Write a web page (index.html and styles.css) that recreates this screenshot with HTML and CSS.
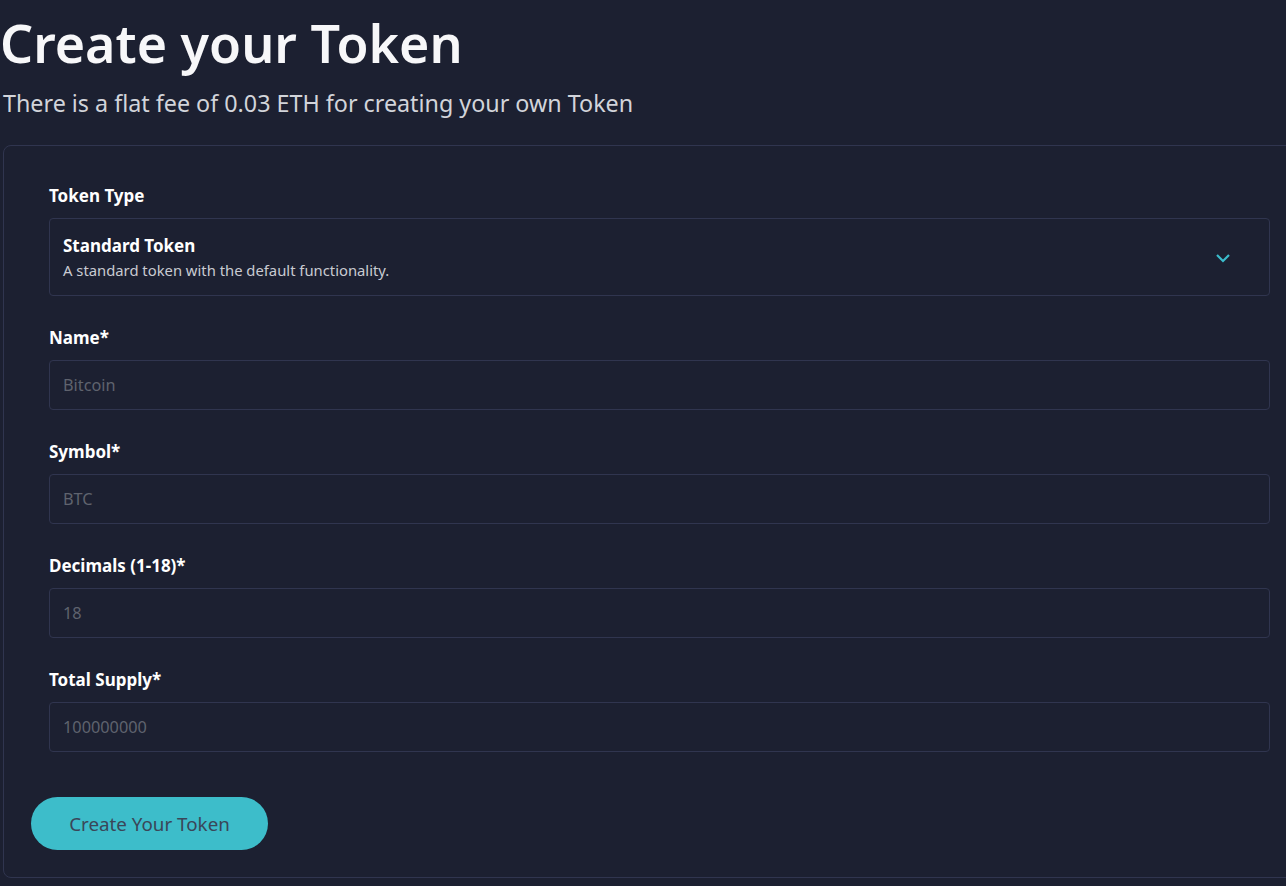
FILE: index.html
```html
<!DOCTYPE html>
<html lang="en">
<head>
    <meta charset="UTF-8">
    <meta name="viewport" content="width=device-width, initial-scale=1.0">
    <title>Create your Token</title>
    <link rel="stylesheet" href="styles.css">
</head>
<body>
    <h1 class="title">Create your Token</h1>
    <p class="subtitle">There is a flat fee of 0.03 ETH for creating your own Token</p>

    <div class="card">
        <div class="fields">
            <div class="field">
                <label class="label">Token Type</label>
                <div class="select">
                    <div class="select-text">
                        <div class="select-title">Standard Token</div>
                        <div class="select-desc">A standard token with the default functionality.</div>
                    </div>
                    <svg class="chevron" width="16" height="10" viewBox="0 0 16 10">
                        <path d="M2 2 L8 8 L14 2" fill="none" stroke="#3bbccc" stroke-width="2.2"/>
                    </svg>
                </div>
            </div>

            <div class="field">
                <label class="label" for="name">Name*</label>
                <input class="input" id="name" type="text" placeholder="Bitcoin">
            </div>

            <div class="field">
                <label class="label" for="symbol">Symbol*</label>
                <input class="input" id="symbol" type="text" placeholder="BTC">
            </div>

            <div class="field">
                <label class="label" for="decimals">Decimals (1-18)*</label>
                <input class="input" id="decimals" type="text" placeholder="18">
            </div>

            <div class="field">
                <label class="label" for="supply">Total Supply*</label>
                <input class="input" id="supply" type="text" placeholder="100000000">
            </div>
        </div>

        <div class="actions">
            <button class="create-btn">Create Your Token</button>
        </div>
    </div>
</body>
</html>
```

FILE: styles.css
```css
html {
    overflow-x: hidden;
}
body {
    margin: 0;
    padding: 0 0 0 3px;
    background-color: #1c2031;
    color: #fff;
    font-family: "Noto Sans", "Open Sans", sans-serif;
}
.title {
    margin: 0 0 0 -3px;
    padding-top: 7px;
    font-size: 52px;
    font-weight: 600;
    line-height: 72px;
    color: #f7f7f9;
}
.subtitle {
    margin: 8px 0 0;
    font-size: 23.3px;
    line-height: 32px;
    color: #d2d4da;
}
.card {
    width: 1313px;
    margin-top: 26px;
    border: 1px solid #30354f;
    border-radius: 8px;
    box-sizing: border-box;
}
.fields {
    padding: 38px 45px 0;
}
.field {
    margin-bottom: 30px;
}
.label {
    display: block;
    font-size: 17px;
    font-weight: 700;
    line-height: 24px;
    margin-bottom: 10px;
    color: #fff;
}
.select {
    display: flex;
    align-items: center;
    justify-content: space-between;
    height: 78px;
    box-sizing: border-box;
    padding: 0 38px 0 13px;
    border: 1px solid #30354f;
    border-radius: 4px;
}
.select-title {
    font-size: 17px;
    font-weight: 700;
    line-height: 22px;
}
.select-desc {
    font-size: 14.8px;
    line-height: 20px;
    margin-top: 3px;
    color: #c9cbd2;
}
.chevron {
    margin-top: 2px;
}
.input {
    display: block;
    width: 100%;
    height: 50px;
    box-sizing: border-box;
    padding: 0 13px;
    background: transparent;
    border: 1px solid #30354f;
    border-radius: 4px;
    font-family: inherit;
    font-size: 16.3px;
    color: #fff;
    outline: none;
}
.input::placeholder {
    color: #5f636e;
}
.actions {
    padding: 15px 27px 27px;
}
.create-btn {
    width: 237px;
    height: 53px;
    border: none;
    border-radius: 27px;
    background-color: #3dbdca;
    color: #3a4658;
    font-family: inherit;
    font-size: 18.8px;
    cursor: pointer;
}
```
